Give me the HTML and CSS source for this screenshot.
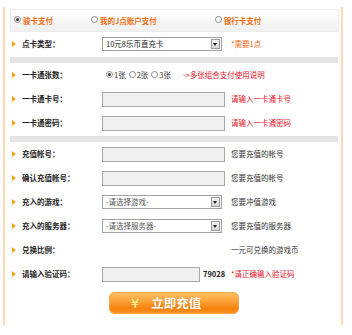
FILE: index.html
```html
<!DOCTYPE html>
<html>
<head>
<meta charset="utf-8">
<link rel="stylesheet" href="styles.css">
</head>
<body>
<div class="panel">
  <div class="tabs">
    <span class="tab t1"><span class="radio on"></span>骏卡支付</span>
    <span class="tab t2"><span class="radio"></span>我的J点账户支付</span>
    <span class="tab t3"><span class="radio"></span>银行卡支付</span>
  </div>

  <div class="row">
    <span class="arrow"></span><span class="label">点卡类型：</span>
    <span class="field"><span class="select w120"><span class="val dark">10元8乐币直充卡</span><span class="drop"></span></span></span>
    <span class="note orange">*需要1点</span>
  </div>
  <div class="sep"></div>

  <div class="row">
    <span class="arrow"></span><span class="label">一卡通张数：</span>
    <span class="field radios">
      <span class="opt"><span class="radio on"></span>1张</span>
      <span class="opt"><span class="radio"></span>2张</span>
      <span class="opt"><span class="radio"></span>3张</span>
      <span class="red link">-&gt;多张组合支付使用说明</span>
    </span>
  </div>
  <div class="row">
    <span class="arrow"></span><span class="label">一卡通卡号：</span>
    <span class="field"><span class="input w123"></span></span>
    <span class="note red">请输入一卡通卡号</span>
  </div>
  <div class="row">
    <span class="arrow"></span><span class="label">一卡通密码：</span>
    <span class="field"><span class="input w123"></span></span>
    <span class="note red">请输入一卡通密码</span>
  </div>
  <div class="sep"></div>

  <div class="row">
    <span class="arrow"></span><span class="label">充值帐号：</span>
    <span class="field"><span class="input w123"></span></span>
    <span class="note">您要充值的帐号</span>
  </div>
  <div class="row">
    <span class="arrow"></span><span class="label">确认充值帐号：</span>
    <span class="field"><span class="input w123"></span></span>
    <span class="note">您要充值的帐号</span>
  </div>
  <div class="row">
    <span class="arrow"></span><span class="label">充入的游戏：</span>
    <span class="field"><span class="select w120"><span class="val">-请选择游戏-</span><span class="drop"></span></span></span>
    <span class="note">您要冲值游戏</span>
  </div>
  <div class="row">
    <span class="arrow"></span><span class="label">充入的服务器：</span>
    <span class="field"><span class="select w120"><span class="val">-请选择服务器-</span><span class="drop"></span></span></span>
    <span class="note">您要充值的服务器</span>
  </div>
  <div class="row">
    <span class="arrow"></span><span class="label">兑换比例：</span>
    <span class="field"></span>
    <span class="note">一元可兑换的游戏币</span>
  </div>
  <div class="row">
    <span class="arrow"></span><span class="label">请输入验证码：</span>
    <span class="field"><span class="input w98"></span><span class="code">79028</span></span>
    <span class="note red">*请正确输入验证码</span>
  </div>

  <div class="btnrow">
    <span class="btn"><span class="yen">¥</span><span class="btxt">立即充值</span></span>
  </div>
</div>
</body>
</html>
```

FILE: styles.css
```css
html, body {
  margin: 0;
  padding: 0;
  background: #fff;
}
body {
  font-family: "Noto Sans CJK SC", "Noto Sans", sans-serif;
  font-size: 7.5px;
  color: #333;
  width: 352px;
  height: 335px;
  overflow: hidden;
}
.panel {
  margin: 7px 0 0 3px;
  width: 329px;
  height: 316px;
  padding: 2px 2px 0 5px;
  border-left: 2px solid #f9dcb3;
  border-right: 2px solid #f9dcb3;
  box-sizing: content-box;
}
.tabs {
  height: 21px;
  border: 1px solid #ececec;
  background: linear-gradient(#ffffff, #f0f0f0);
  display: flex;
  align-items: center;
}
.tab {
  display: flex;
  align-items: center;
  font-weight: bold;
  color: #f26c10;
  line-height: 1;
}
.t1 { margin-left: 3px; }
.t2 { margin-left: 38px; }
.t3 { margin-left: 58px; }
.radio {
  display: inline-block;
  width: 5px;
  height: 5px;
  border: 1px solid #8a8a8a;
  border-radius: 50%;
  background: #fff;
  margin-right: 2px;
  position: relative;
  top: -1px;
}
.radio.on::after {
  content: "";
  position: absolute;
  left: 1px;
  top: 1px;
  width: 3px;
  height: 3px;
  border-radius: 50%;
  background: #333;
}
.row {
  height: 24px;
  display: flex;
  align-items: center;
  line-height: 1;
}
.arrow {
  width: 0;
  height: 0;
  border-left: 4px solid #f2a81e;
  border-top: 3px solid transparent;
  border-bottom: 3px solid transparent;
  margin-left: 2px;
}
.label {
  width: 80px;
  margin-left: 6px;
  font-weight: bold;
  color: #222;
}
.field {
  width: 129px;
  display: flex;
  align-items: center;
}
.note {
  color: #333;
}
.orange { color: #f4640f; }
.red { color: #e8102a; }
.sep {
  height: 6px;
  margin-top: 1px;
  margin-right: 1px;
  background: #e4e4e4;
}
.input {
  display: inline-block;
  height: 13px;
  border: 1px solid #a9a9a9;
  background: #f0f0f0;
}
.w123 { width: 121px; }
.w98 { width: 96px; }
.select {
  display: flex;
  align-items: center;
  justify-content: space-between;
  height: 12px;
  border: 1px solid #a0a0a0;
  background: #fff;
  padding: 0 1px 0 3px;
}
.w120 { width: 114px; }
.val { color: #555; }
.val.dark { color: #222; }
.drop {
  width: 7px;
  height: 8px;
  border: 1px solid #9a9a9a;
  background: linear-gradient(#f4f4f4, #d8d8d8);
  position: relative;
}
.drop::after {
  content: "";
  position: absolute;
  left: 1px;
  top: 3px;
  border-top: 3px solid #222;
  border-left: 2.5px solid transparent;
  border-right: 2.5px solid transparent;
}
.radios {
  width: auto;
  margin-left: 4px;
}
.opt {
  display: flex;
  align-items: center;
  white-space: nowrap;
  margin-right: 3px;
  color: #333;
}
.opt .radio { margin-right: 1px; }
.link { margin-left: 9px; }
.code {
  font-weight: bold;
  color: #222;
  margin-left: 3px;
}
.btnrow {
  margin-top: 6px;
  padding-left: 99px;
}
.btn {
  display: flex;
  align-items: center;
  width: 130px;
  height: 22px;
  border-radius: 6px;
  background: linear-gradient(#ffc36a 0%, #fca43a 40%, #f5830c 75%, #f89326 100%);
  box-shadow: inset 0 0 0 1px #f6a64a;
}
.yen {
  color: #fff7a0;
  font-family: "DejaVu Sans", sans-serif;
  font-size: 13px;
  margin-left: 22px;
  line-height: 1;
}
.btxt {
  margin-left: 12px;
  color: #fff;
  font-weight: bold;
  font-size: 12.5px;
  line-height: 1;
  text-shadow: 0 0 1px #d86a00;
}
```
